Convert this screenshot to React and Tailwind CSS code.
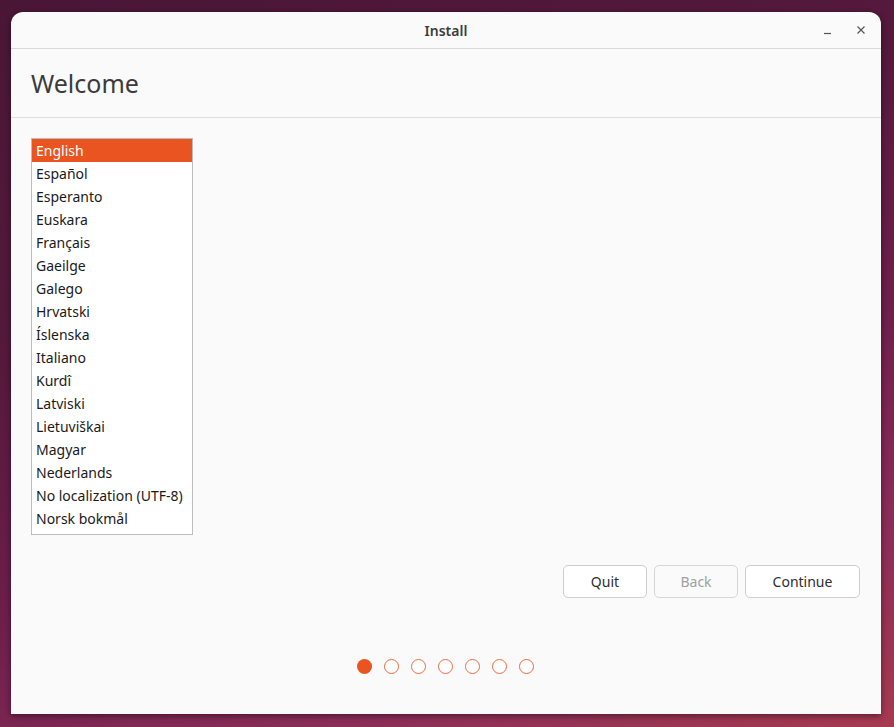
import React, { useState } from "react";

const languages = [
  "English",
  "Español",
  "Esperanto",
  "Euskara",
  "Français",
  "Gaeilge",
  "Galego",
  "Hrvatski",
  "Íslenska",
  "Italiano",
  "Kurdî",
  "Latviski",
  "Lietuviškai",
  "Magyar",
  "Nederlands",
  "No localization (UTF-8)",
  "Norsk bokmål",
];

export default function App() {
  const [selected, setSelected] = useState(0);

  return (
    <div
      className="h-[727px] w-[894px] overflow-hidden pt-[12px] pl-[11px] bg-[linear-gradient(160deg,#4a1636_0%,#55193c_35%,#6e1f4c_60%,#8a2c58_80%,#a63a50_100%)]"
      style={{ fontFamily: '"Noto Sans", "DejaVu Sans", sans-serif' }}
    >
      <div className="flex h-[702px] w-[870px] flex-col rounded-t-[12px] bg-[#fafafa] shadow-[0_2px_6px_rgba(0,0,0,0.45)]">
        {/* title bar */}
        <div className="relative flex h-[37px] shrink-0 items-center justify-center border-b border-[#d9d9d9]">
          <span className="text-[14px] font-semibold text-[#3d3d3d]">Install</span>
          <div className="absolute right-[12px] top-0 flex h-full items-center gap-[17px] text-[#555]">
            <svg width="16" height="16" viewBox="0 0 16 16">
              <path d="M4 11.5h7" stroke="currentColor" strokeWidth="1.2" />
            </svg>
            <svg width="16" height="16" viewBox="0 0 16 16">
              <path d="M4.5 4.5l7 7M11.5 4.5l-7 7" stroke="currentColor" strokeWidth="1.2" />
            </svg>
          </div>
        </div>

        {/* header */}
        <div className="flex h-[69px] shrink-0 items-center border-b border-[#dedede] px-[20px]">
          <h1 className="text-[25px] font-normal leading-none text-[#3b3b3b]">Welcome</h1>
        </div>

        {/* content */}
        <div className="flex flex-1 flex-col px-[20px] pt-[20px]">
          <div className="h-[397px] w-[162px] border border-[#bdbdbd] bg-white">
            {languages.map((lang, i) => (
              <div
                key={lang}
                onClick={() => setSelected(i)}
                className={
                  i === selected
                    ? "flex h-[23px] items-center bg-[#e95420] px-[4px] text-[14px] text-white"
                    : "flex h-[23px] items-center px-[4px] text-[14px] text-[#1a1a1a]"
                }
              >
                {lang}
              </div>
            ))}
          </div>

          <div className="mt-[30px] flex justify-end gap-[7px] pr-[1px]">
            <button className="h-[33px] w-[84px] rounded-[5px] border border-[#cdcdcd] bg-white text-[14px] text-[#2e2e2e]">
              Quit
            </button>
            <button
              disabled
              className="h-[33px] w-[84px] rounded-[5px] border border-[#d6d6d6] bg-[#fafafa] text-[14px] text-[#a0a0a0]"
            >
              Back
            </button>
            <button className="h-[33px] w-[115px] rounded-[5px] border border-[#cdcdcd] bg-white text-[14px] text-[#2e2e2e]">
              Continue
            </button>
          </div>

          <div className="mt-[61px] flex justify-center gap-[12px] pr-[1px]">
            {[0, 1, 2, 3, 4, 5, 6].map((i) => (
              <span
                key={i}
                className={
                  i === 0
                    ? "h-[15px] w-[15px] rounded-full bg-[#e95420]"
                    : "h-[15px] w-[15px] rounded-full border-[1.5px] border-[#ec6a3f] bg-white"
                }
              />
            ))}
          </div>
        </div>
      </div>
    </div>
  );
}
